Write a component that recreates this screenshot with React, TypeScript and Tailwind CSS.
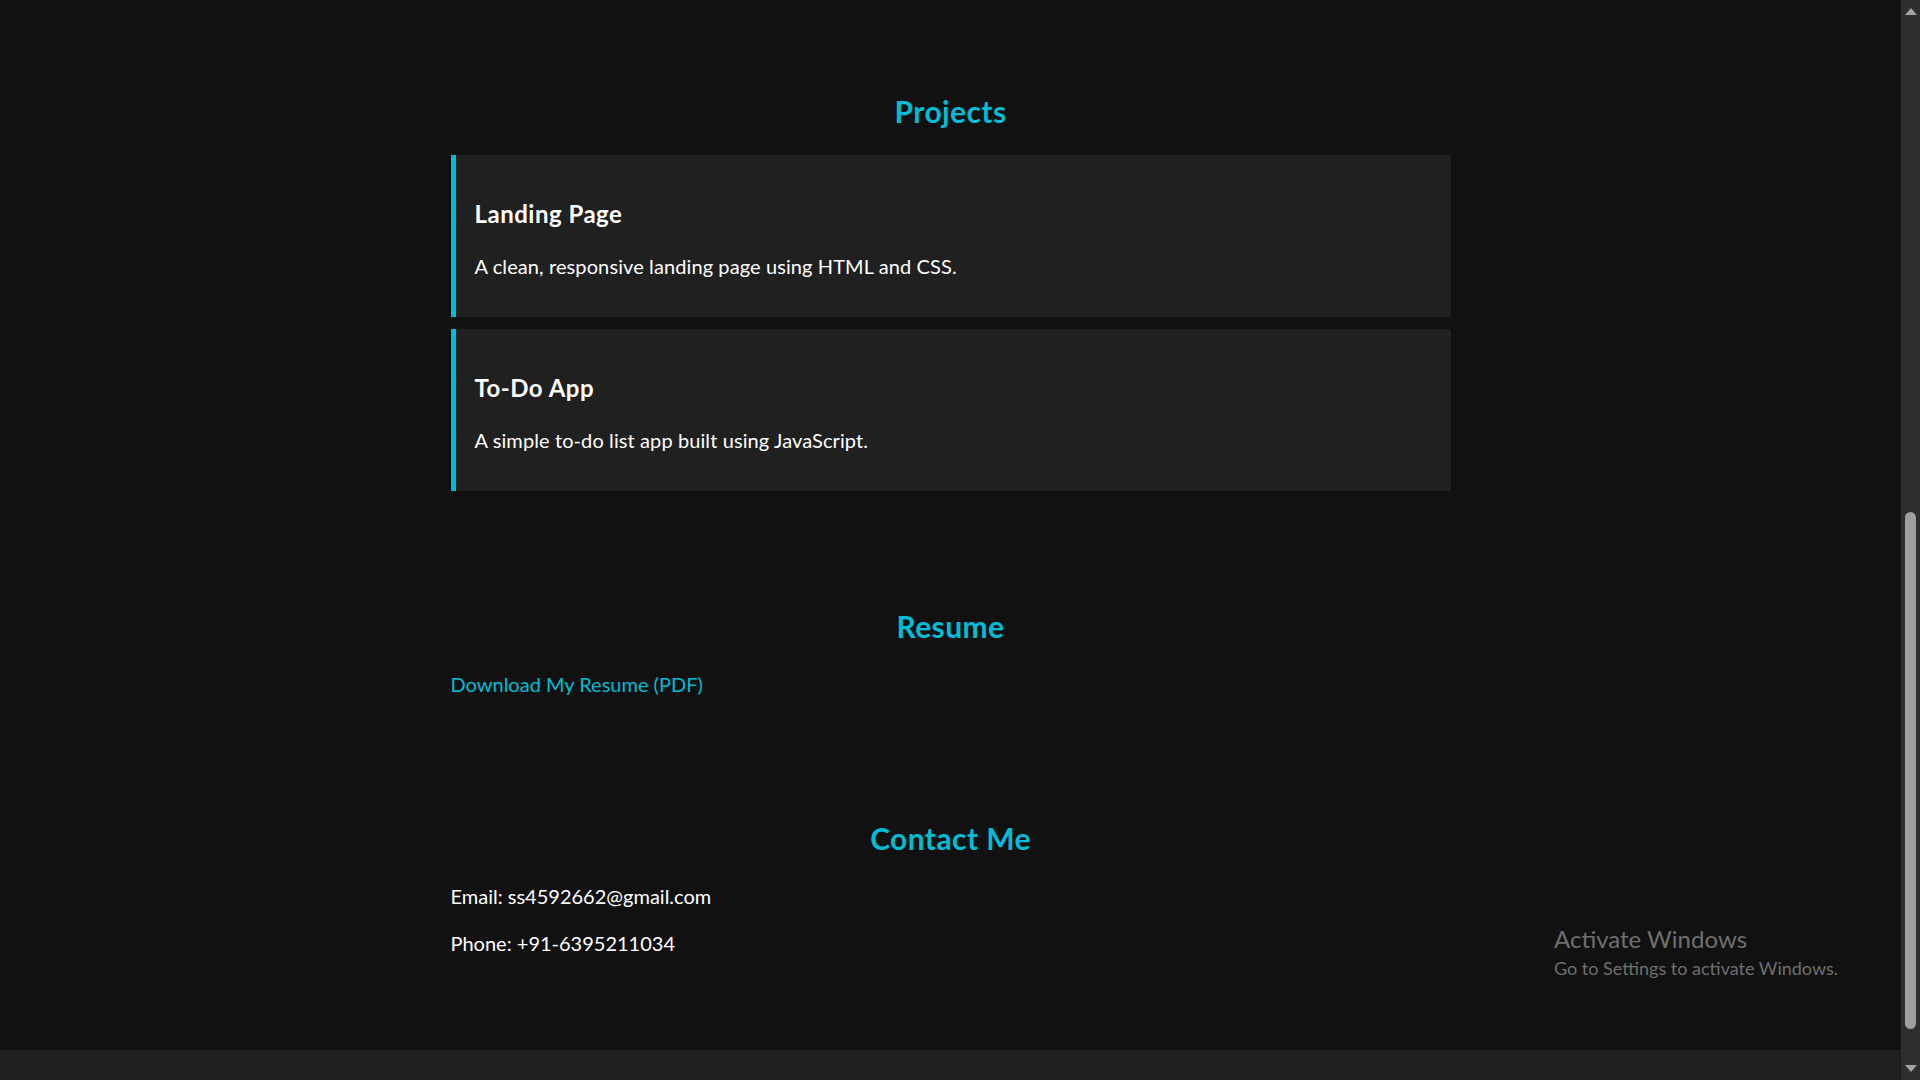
import React from "react";

const projects = [
  { title: "Landing Page", desc: "A clean, responsive landing page using HTML and CSS." },
  { title: "To-Do App", desc: "A simple to-do list app built using JavaScript." },
];

function Heading({ children }: { children: React.ReactNode }) {
  return (
    <h2 className="text-center text-[30px] leading-[36px] font-bold tracking-[0.4px] text-[#00bcd4]">
      {children}
    </h2>
  );
}

export default function App() {
  return (
    <div
      className="relative flex h-[1080px] w-[1920px] overflow-hidden bg-[#111111] text-white"
      style={{ fontFamily: "Lato, 'Open Sans', sans-serif" }}
    >
      <div className="flex w-[1901px] flex-col">
        <main className="flex-1">
          <div className="mx-auto w-[1000px]">
            <section className="pt-[93px]">
              <Heading>Projects</Heading>
              <div className="mt-[26px] flex flex-col gap-[12px]">
                {projects.map((p) => (
                  <div
                    key={p.title}
                    className="border-l-[5px] border-[#00bcd4] bg-[#202020] pl-[19px] pr-[20px] pt-[44px] pb-[37px]"
                  >
                    <h3 className="text-[24px] leading-[30px] font-bold tracking-[0.5px] text-white">{p.title}</h3>
                    <p className="mt-[23px] text-[20px] leading-[28px] tracking-[0.1px] text-white">{p.desc}</p>
                  </div>
                ))}
              </div>
            </section>

            <section className="pt-[117px]">
              <Heading>Resume</Heading>
              <a href="#" className="mt-[26px] block text-[20px] leading-[28px] text-[#00bcd4]">
                Download My Resume (PDF)
              </a>
            </section>

            <section className="pt-[122px]">
              <Heading>Contact Me</Heading>
              <p className="mt-[26px] text-[20px] leading-[28px]">Email: ss4592662@gmail.com</p>
              <p className="mt-[19px] text-[20px] leading-[28px]">Phone: +91-6395211034</p>
            </section>
          </div>
        </main>
        <footer className="h-[30px] bg-[#202020]" />
      </div>

      {/* scrollbar */}
      <div className="relative w-[19px] bg-[#2e2e2e]">
        <svg className="absolute left-[4px] top-[8px]" width="12" height="7" viewBox="0 0 12 7">
          <polygon points="6,0 12,7 0,7" fill="#a3a3a3" />
        </svg>
        <div className="absolute left-[4px] top-[512px] h-[517px] w-[11px] rounded-full bg-[#9f9f9f]" />
        <svg className="absolute left-[4px] top-[1065px]" width="12" height="7" viewBox="0 0 12 7">
          <polygon points="0,0 12,0 6,7" fill="#a3a3a3" />
        </svg>
      </div>

      {/* Windows activation watermark */}
      <div className="pointer-events-none absolute left-[1554px] top-[923px] text-[#6f6f6f]">
        <div className="text-[24px] leading-[32px]">Activate Windows</div>
        <div className="text-[18px] leading-[26px]">Go to Settings to activate Windows.</div>
      </div>
    </div>
  );
}
